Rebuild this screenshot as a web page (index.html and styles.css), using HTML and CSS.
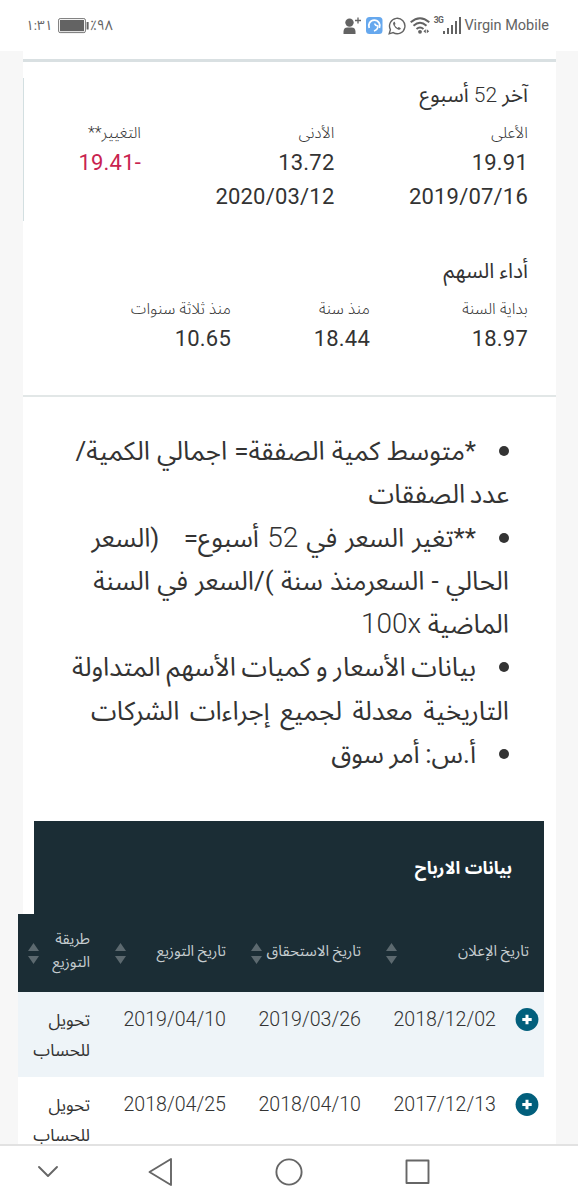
FILE: index.html
```
<!DOCTYPE html>
<html lang="ar">
<head>
  <meta charset="UTF-8">
  <meta name="viewport" content="width=device-width, initial-scale=1.0">
  <title>بيانات السهم</title>
  <link rel="stylesheet" href="styles.css">
</head>
<body>

<header class="status-bar">
  <span class="time">١:٣١</span>
  <svg class="battery" width="32" height="16" viewBox="0 0 32 16">
    <rect x=".6" y=".6" width="26.8" height="14" rx="1.5" fill="#fff" stroke="#777" stroke-width="1"/>
    <rect x="2" y="2" width="24" height="11.2" fill="#636363"/>
    <rect x="28.6" y="4" width="2" height="7.5" fill="#636363"/>
  </svg>
  <span class="percent">٪٩٨</span>
  <span class="spacer"></span>
  <svg class="ic-person" width="19" height="18" viewBox="0 0 19 18" fill="#636363">
    <circle cx="6.500" cy="5.600" r="4.200"/>
    <path d="M.5 17v-2.200Q.5 10.500 4.500 10.500h4q4 0 4 4.300V17z"/>
    <path d="M12 3.500h6M15 .5v6" stroke="#636363" stroke-width="1.300"/>
  </svg>
  <svg class="ic-app" width="17" height="17" viewBox="0 0 17 17">
    <rect width="16.500" height="17" rx="3.500" fill="#66a8ee"/>
    <path d="M3.200 11A5.600 5.600 0 1 1 13.400 11" fill="none" stroke="#fff" stroke-width="1.800"/>
    <path d="M8.500 6.500q.5 2 3.300 2.500.3 3.500-3.800 5" fill="none" stroke="#fff" stroke-width="1.500"/>
  </svg>
  <svg class="ic-whatsapp" width="18" height="18" viewBox="0 0 18 18" fill="none" stroke="#636363" stroke-width="1.400">
    <path d="M1.200 16.800l1.200-4.200A7.700 7.700 0 1 1 5.200 15.600z"/>
    <path d="M5.900 4.800q-1.500 1.200-.5 3.200 1.700 3.600 5 4.700 1.800.4 2.500-1.500l-2.200-1.200-1 1q-2-.8-3-3l.8-.9-.8-2.300z" fill="#636363" stroke="none"/>
  </svg>
  <svg class="ic-wifi" width="20" height="18" viewBox="0 0 20 18" fill="none" stroke="#636363" stroke-width="1.900">
    <path d="M.7 5.300Q10-2.700 19.300 5.300M3.500 8.700Q10 3 16.500 8.700M6.500 12Q10 9 13.500 12"/>
    <circle cx="10" cy="14.800" r="1.900" fill="#636363" stroke="none"/>
    <path d="M15.800 12.200v4l-2.400-2zM16.800 12.200v4l2.400-2z" fill="#636363" stroke="none"/>
  </svg>
  <span class="net">3G</span>
  <svg class="ic-signal" width="18" height="17" viewBox="0 0 18 17" fill="#636363">
    <rect x="0" y="14" width="2" height="3"/><rect x="4" y="11" width="2" height="6"/>
    <rect x="8" y="8" width="2" height="9"/><rect x="12" y="4" width="2" height="13"/>
    <rect x="16" y="0" width="2" height="17"/>
  </svg>
  <span class="carrier">Virgin Mobile</span>
</header>

<main class="page" dir="rtl">
  <section class="stats weeks">
    <div class="weeks-box">
      <h3>آخر <span class="num">52</span> أسبوع</h3>
      <div class="stats-row">
        <div class="stat"><div class="label">الأعلى</div><div class="value">19.91</div><div class="value">2019/07/16</div></div>
        <div class="stat"><div class="label">الأدنى</div><div class="value">13.72</div><div class="value">2020/03/12</div></div>
        <div class="stat"><div class="label">التغيير**</div><div class="value down">-19.41</div></div>
      </div>
    </div>
  </section>

  <section class="stats performance">
    <h3>أداء السهم</h3>
    <div class="stats-row">
      <div class="stat"><div class="label">بداية السنة</div><div class="value">18.97</div></div>
      <div class="stat"><div class="label">منذ سنة</div><div class="value">18.44</div></div>
      <div class="stat"><div class="label">منذ ثلاثة سنوات</div><div class="value">10.65</div></div>
    </div>
  </section>

  <ul class="notes">
    <li><span class="loose">*متوسط كمية الصفقة= اجمالي الكمية/</span><br><span class="tight">عدد الصفقات</span></li>
    <li><span class="wide">**تغير السعر في <span class="num">52</span> أسبوع=&nbsp;&nbsp; (السعر</span><br><span class="loose">الحالي - السعرمنذ سنة )/السعر في السنة</span><br>الماضية <span class="num" dir="ltr">100x</span></li>
    <li><span class="snug">بيانات الأسعار و كميات الأسهم المتداولة</span><br><span class="widest">التاريخية معدلة لجميع إجراءات الشركات</span></li>
    <li><span class="snug">أ.س: أمر سوق</span></li>
  </ul>

  <h2 class="table-title">بيانات الارباح</h2>
  <table class="dividends">
    <thead>
      <tr>
        <th class="col-announce">تاريخ الإعلان<i class="sort"></i></th>
        <th class="col-due">تاريخ الاستحقاق<i class="sort"></i></th>
        <th class="col-pay">تاريخ التوزيع<i class="sort"></i></th>
        <th class="col-method">طريقة<br>التوزيع<i class="sort"></i></th>
      </tr>
    </thead>
    <tbody>
      <tr>
        <td class="first"><svg class="plus" width="24" height="25" viewBox="0 0 24 25"><circle cx="12" cy="12.500" r="11.400" fill="#025f7c"/><path d="M12 7.800v9.400M7.300 12.500h9.400" stroke="#fff" stroke-width="3"/></svg>2018/12/02</td>
        <td>2019/03/26</td>
        <td>2019/04/10</td>
        <td class="method">تحويل<br>للحساب</td>
      </tr>
      <tr>
        <td class="first"><svg class="plus" width="24" height="25" viewBox="0 0 24 25"><circle cx="12" cy="12.500" r="11.400" fill="#025f7c"/><path d="M12 7.800v9.400M7.300 12.500h9.400" stroke="#fff" stroke-width="3"/></svg>2017/12/13</td>
        <td>2018/04/10</td>
        <td>2018/04/25</td>
        <td class="method">تحويل<br>للحساب</td>
      </tr>
    </tbody>
  </table>
</main>

<nav class="nav-bar">
  <svg width="578" height="54" viewBox="0 0 578 54" fill="none" stroke="#666" stroke-width="1.900" stroke-linejoin="round" stroke-linecap="round">
    <path d="M39 21l9 9 9-9"/>
    <path d="M171 13v26l-21.500-13z"/>
    <circle cx="289" cy="26" r="12.600"/>
    <rect x="406.500" y="14.500" width="22" height="22.500"/>
  </svg>
</nav>
</body>
</html>
```
FILE: styles.css
```
* { box-sizing: border-box; }
body { margin: 0; height: 1200px; overflow: hidden; display: flex; flex-direction: column; background: #f7f7f7; font-family: Roboto, "Noto Sans Arabic", "DejaVu Sans", sans-serif; color: #333; }

.status-bar { flex: 0 0 51px; display: flex; align-items: center; background: #fff; color: #636363; padding: 0 29px 0 26px; font-size: 16px; }
.time { width: 32px; font-size: 13.500px; }
.percent { font-size: 14px; }
.spacer { flex: 1; }
.ic-app { margin-left: 4px; }
.ic-whatsapp { margin-left: 5px; }
.ic-wifi { margin-left: 4px; }
.net { font-size: 8.500px; font-weight: 700; letter-spacing: -.5px; align-self: flex-start; margin: 15px 0 0 4px; }
.carrier { margin-left: 3px; font-size: 14.500px; }

.page { flex: 0 0 1093px; overflow: hidden; width: 538px; margin-left: 18px; padding-left: 5px; background: linear-gradient(to left, #fff 533px, transparent 533px); }
.stats h3 { margin: 0; font-weight: 400; font-size: 21px; line-height: 32px; }
.stats-row { display: flex; margin-top: 9px; }
.stat { flex: none; }
.label { font-size: 16px; line-height: 26px; font-weight: 300; }
.value { font-size: 22px; line-height: 34px; letter-spacing: .2px; }
.down { color: #c9234f; }
.num { font-weight: 300; }

.weeks { margin-top: 8px; border-top: 3px solid #d9e0e2; padding-top: 16px; height: 187px; }
.weeks-box { height: 143px; border-left: 1px solid #d3dfe1; padding: 1px 28px 0 0; }
.weeks .stat { width: 193.500px; }
.performance { padding: 9px 28px 0 0; height: 151px; border-bottom: 2px solid #e2e7e7; }
.performance .stat { width: 158px; }
.performance .stat:nth-child(2) { width: 139px; }

.notes { margin: 0; padding: 33px 47px 0 0; height: 424px; list-style: none; font-size: 26px; line-height: 43.300px; font-weight: 400; }
.notes li { white-space: nowrap; }
.notes li::before { content: ""; display: inline-block; width: 10px; height: 10px; border-radius: 50%; background: #333; margin: 0 0 4px 23px; }
.notes .num { font-size: 28px; line-height: 1; }
.tight { word-spacing: -2px; letter-spacing: -.4px; }
.snug { word-spacing: -.8px; }
.loose { word-spacing: .8px; }
.wide { word-spacing: 1.700px; }
.widest { word-spacing: 4px; }

.table-title { margin: 0 12px 0 11px; height: 93px; background: #1b2d35; color: #fff; font-size: 17.500px; line-height: 94px; padding-right: 32px; font-weight: 700; }
.dividends { width: 526px; margin-right: 12px; border-collapse: collapse; table-layout: fixed; background: #fff; }
.dividends th { height: 78px; background: #1b2d35; color: #c5cccf; font-size: 15px; line-height: 23px; font-weight: 400; text-align: right; padding: 0 15px 4px 0; position: relative; white-space: nowrap; }
.col-announce { width: 168px; }
.col-due { width: 135px; }
.col-pay { width: 136px; }
.sort { position: absolute; left: 10px; top: 29px; width: 11px; height: 21px; background: #5c696f; clip-path: polygon(50% 0, 100% 38%, 0 38%, 50% 0, 50% 100%, 0 62%, 100% 62%, 50% 100%); }
.dividends td { height: 85px; padding: 13px 15px 0 0; vertical-align: top; font-size: 19.600px; line-height: 30px; font-weight: 300; }
.dividends tbody tr:first-child { background: #eef4f8; }
.dividends td.first { padding: 13px 5px 0 0; }
.dividends td.method { font-size: 17px; font-weight: 400; }
.plus { vertical-align: middle; margin: -2px 0 0 19px; }

.nav-bar { flex: 0 0 56px; background: #fff; border-top: 2px solid #e2e2e2; }
.nav-bar svg { display: block; }
```
